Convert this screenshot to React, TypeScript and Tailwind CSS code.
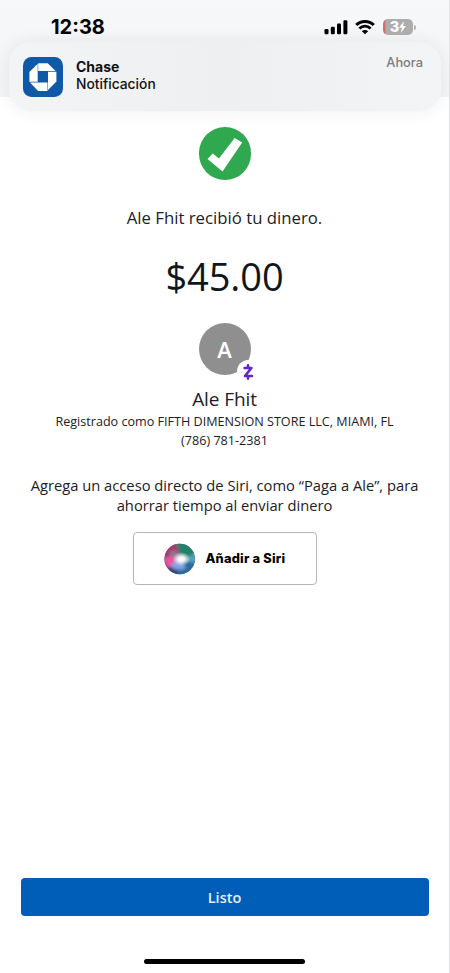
import React from 'react';

const StatusIcons: React.FC = () => (
  <div className="flex items-center">
    <svg width="24" height="16" viewBox="0 0 24 16" className="mr-[7px]">
      <rect x="0.5" y="10" width="4" height="5.2" rx="1.2" />
      <rect x="6.8" y="7.8" width="4" height="7.4" rx="1.2" />
      <rect x="13" y="4.6" width="4" height="10.6" rx="1.2" />
      <rect x="19.4" y="1.2" width="4" height="14" rx="1.2" />
    </svg>
    <svg width="20" height="16" viewBox="0 0 20 16" className="mr-[8px]">
      <path d="M1.2 6a12.6 12.6 0 0 1 17.6 0" fill="none" stroke="black" strokeWidth="3" />
      <path d="M4.4 9.4a8.2 8.2 0 0 1 11.2 0" fill="none" stroke="black" strokeWidth="2.8" />
      <path d="M10 15.2 6.8 12.2a4.6 4.6 0 0 1 6.4 0z" />
    </svg>
    <div className="flex h-[16px] w-[30px] items-center justify-center overflow-hidden rounded-[5px] bg-linear-to-r from-[#dc6b6b] from-[2px] to-[#adadae] to-[3px] text-white">
      <span className="font-['Inter'] text-[14.5px] leading-none font-extrabold">3</span>
      <svg width="7" height="12" viewBox="0 0 7 12" className="fill-white">
        <path d="M5 0 0 6.8h3L1.8 12 7 5H4z" />
      </svg>
    </div>
    <div className="ml-[1px] h-[5px] w-[2px] rounded-r-full bg-[#b4b4b6]" />
  </div>
);

const ChaseLogo: React.FC = () => (
  <svg width="40" height="40" viewBox="0 0 40 40" className="shrink-0">
    <rect width="40" height="40" rx="8.5" fill="#1059a8" />
    <g fill="white">
      <path d="M15.2 6.2h9.5l7.9 7.9H15.2z" />
      <path d="M33.4 14.8v9.8l-8.4 8.3V14.8z" />
      <path d="M24.5 33.9h-9.4L7 25.5h17.5z" />
      <path d="M6.4 24.8V15l8.3-8.2v18z" />
    </g>
  </svg>
);

const SiriOrb: React.FC = () => (
  <svg width="32" height="32" viewBox="0 0 32 32">
    <defs>
      <radialGradient id="glow">
        <stop offset="0" stopColor="#fff" />
        <stop offset=".35" stopColor="#fff" stopOpacity=".9" />
        <stop offset="1" stopColor="#fff" stopOpacity="0" />
      </radialGradient>
      <filter id="soft" x="-30%" y="-30%" width="160%" height="160%">
        <feGaussianBlur stdDeviation="1.4" />
      </filter>
      <clipPath id="orb">
        <circle cx="15.7" cy="16" r="15.2" />
      </clipPath>
    </defs>
    <g clipPath="url(#orb)">
      <rect width="32" height="32" fill="#3d4f80" />
      <g filter="url(#soft)">
        <path d="M-2-2h15l3 18L3 26l-5-3z" fill="#a83a6c" />
        <path d="M11-2h23v13l-16 5z" fill="#248169" />
        <path d="M34 9v13l-17-5z" fill="#51a3b6" />
        <path d="M34 20v14H10l6-16z" fill="#2b6a9f" />
        <path d="M2 23 16 16l-3 18H3z" fill="#39427e" />
        <path d="M6 9q8-4 11 6L6 14z" fill="#8c7a90" />
        <path d="M0 15q9-3 15 1-3 9-12 8z" fill="#ea57a3" />
        <path d="M7 24q3-8 10-8l5 9q-8 4-15-1z" fill="#83a5e0" />
      </g>
      <ellipse cx="17.5" cy="16" rx="9" ry="7" fill="url(#glow)" />
    </g>
  </svg>
);

const Notification: React.FC = () => (
  <div className="mx-[9px] mt-[3px] flex h-[69px] w-[432px] rounded-[22px] bg-linear-to-r from-[#f3f4f6] via-[#eeeff1] to-[#f3f4f6] pt-[15px] pr-[18px] pl-[14px] font-['Inter'] shadow-[0_0_18px_rgba(0,0,0,0.07)]">
    <ChaseLogo />
    <div className="ml-[13px] pt-[2px] text-[14px] leading-[16.5px] text-[#111]">
      <p className="font-bold">Chase</p>
      <p className="text-[13.8px] font-medium">Notificación</p>
    </div>
    <p className="ml-auto text-[12.8px] leading-[11px] font-medium text-[#7b7c80]">Ahora</p>
  </div>
);

const App: React.FC = () => {
  return (
    <div className="flex h-[973px] w-[450px] flex-col border-r border-[#e3e4e6] bg-white font-['Open_Sans',sans-serif] text-[#1b2127]">
      <header className="h-[97px] shrink-0 bg-linear-to-b from-[#f7f8f9] to-[#f3f4f6]">
        <div className="flex h-[39px] items-end justify-between pr-[33px] pl-[51px]">
          <span className="-mb-[3px] font-['Inter'] text-[20px] leading-[30px] font-bold text-black">12:38</span>
          <div className="-mb-[4px] h-[24px]">
            <StatusIcons />
          </div>
        </div>
        <Notification />
      </header>

      <main className="flex flex-1 flex-col items-center pt-[30px] text-center">
        <div className="flex h-[53px] w-[52px] items-center justify-center rounded-full bg-[#2fa84f]">
          <svg width="36" height="36" viewBox="0 0 36 36" className="fill-white">
            <path d="m0.5 23 5.2-5.6 6.3 5.2L27.6 2l7.6 4.6-19.7 29z" />
          </svg>
        </div>
        <p className="mt-[26px] text-[16.75px] leading-[24px]">Ale Fhit recibió tu dinero.</p>
        <h1 className="mt-[21px] text-[38px] leading-[50px] tracking-[-0.1px] text-[#10161c]">$45.00</h1>

        <div className="relative mt-[22px] flex h-[52px] w-[52px] items-center justify-center rounded-full bg-[#8f8f8f]">
          <span className="text-[22px] leading-none font-semibold text-white">A</span>
          <div className="absolute top-[37px] left-[38px] flex h-[23px] w-[23px] items-center justify-center rounded-full bg-white">
            <svg width="11" height="16" viewBox="0 0 11 16" fill="none" stroke="#6425c4" strokeWidth="2.6">
              <path d="M1.6 4h6.8L2 12h7M5 1.4V4M5 12v2.6" strokeLinejoin="round" strokeLinecap="round" />
            </svg>
          </div>
        </div>
        <h2 className="mt-[11px] text-[19px] leading-[26px] tracking-[-0.1px]">Ale Fhit</h2>
        <p className="text-[12.6px] leading-[19px]">Registrado como FIFTH DIMENSION STORE LLC, MIAMI, FL</p>
        <p className="mt-px text-[12.6px] leading-[18px]">(786) 781-2381</p>
        <p className="mt-[25px] text-[14.73px] leading-[20px]">
          Agrega un acceso directo de Siri, como “Paga a Ale”, para
          <br />
          ahorrar tiempo al enviar dinero
        </p>
        <button className="mt-[17px] flex h-[53px] w-[184px] items-center rounded-[4px] border border-[#b5b6b8] pl-[30px]">
          <SiriOrb />
          <span className="mt-px ml-[10px] font-['Inter'] text-[12.8px] font-extrabold tracking-[0.22px] text-black">Añadir a Siri</span>
        </button>
      </main>

      <footer className="flex h-[95px] shrink-0 flex-col items-center">
        <button className="h-[38px] w-[408px] rounded-[4px] bg-[#005eb8] pt-px text-[14.5px] font-semibold text-[#e6f1fb]">Listo</button>
        <div className="mt-[43px] h-[5px] w-[161px] rounded-full bg-black" />
      </footer>
    </div>
  );
};
export default App;
